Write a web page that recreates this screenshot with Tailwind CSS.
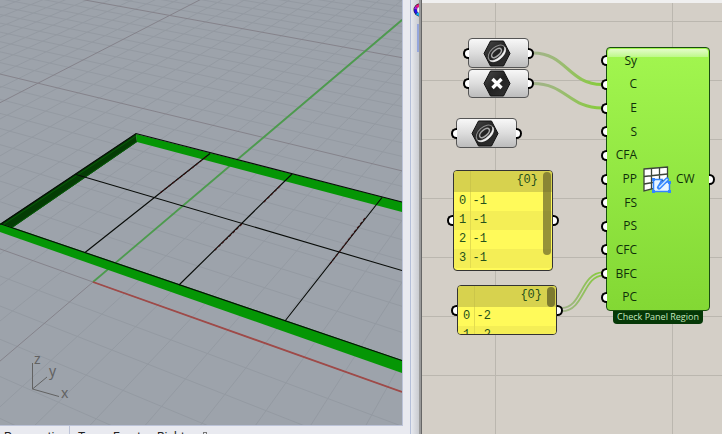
<!DOCTYPE html>
<html lang="en">
<head>
<meta charset="utf-8">
<title>Perspective view and component canvas</title>
<script src="https://cdn.jsdelivr.net/npm/@tailwindcss/browser@4"></script>
</head>
<body class="h-screen overflow-hidden">
<div class="flex h-full min-h-0 bg-[#e9eaf0]">

  <!-- 3D viewport with its tabs -->
  <section class="flex min-w-0 flex-1 flex-col">
    <div class="relative min-h-0 flex-1 overflow-hidden border-r border-b border-[#bcc3d8] bg-[#9da3ab]">
      <svg class="absolute inset-0 h-full w-full" viewBox="0 0 402 425" preserveAspectRatio="xMinYMin slice" role="img" aria-label="Perspective view">
        <g id="minor" stroke="#949aa2" stroke-width="1"></g>
        <g id="major" stroke="#85838b" stroke-width="1"></g>
        <path d="M93 282L402 20" stroke="#4d9b4e" stroke-width="1.8"/>
        <path d="M93 282L402 392" stroke="#9f4a48" stroke-width="1.8"/>
        <path d="M0 224L136 133.500L137 142L12 228Z" fill="#043c04"/>
        <path d="M12 227.500L137 141.500" stroke="#065c06" stroke-width="1"/>
        <path d="M2 225.500L136 136" stroke="#075b07" stroke-width="1"/>
        <path d="M136 134L402 202V212L137 142Z" fill="#059605"/>
        <path d="M0 223L402 360V373L0 232Z" fill="#059605"/>
        <g stroke="#080b08" stroke-width="1.1" fill="none">
          <path d="M0 224.500L136 133.500L402 202"/>
          <path d="M1 224L402 360.500"/>
          <path d="M76 174.500L402 270.500"/>
          <path d="M210 153.500L85 252.500M292 174L179 285M382 197.500L285 321"/>
          <path d="M206 157L160 193M280 186L264 202M242 224L214 251M365 218L330 264" stroke="#3a1010" stroke-dasharray="3 2"/>
        </g>
        <g stroke="#626262" stroke-width="1" fill="none">
          <path d="M32.500 363V389L47 377M32.500 389L59 396.500"/>
        </g>
        <g fill="#626262" font-family="'Noto Sans',sans-serif" font-size="14">
          <text x="34" y="364">z</text><text x="49" y="376">y</text><text x="61" y="398">x</text>
        </g>
      </svg>
    </div>
    <nav class="flex h-2 shrink-0 items-start overflow-hidden pl-1 font-[Roboto,sans-serif] text-[12px] leading-4 text-[#222]">
      <button class="w-[65px] pt-[3px] text-left">Perspective</button>
      <button class="w-[44px] border-l border-[#bcc3d8] pt-[3px] pl-2 text-left">Top</button>
      <button class="w-[44px] pt-[3px] text-left">Front</button>
      <button class="w-[46px] pt-[3px] text-left">Right</button>
      <button class="mt-[6px] h-2 w-1 border border-[#777]" aria-label="New viewport"></button>
    </nav>
  </section>

  <!-- Docking edge between the windows -->
  <div class="ml-[7px] w-[9px] shrink-0 overflow-hidden border-l border-[#b4bfd9] bg-gradient-to-r from-[#e7e9ef] to-[#c9cbd0]">
    <div class="relative h-full">
      <svg class="absolute top-[3px] left-[2px] h-[14px] w-[14px]" viewBox="0 0 14 14">
        <circle cx="7" cy="7" r="6.500" fill="#191919"/>
        <g fill="none" stroke-width="3">
          <path d="M7 2.500A4.500 4.500 0 0 0 3.500 4.200" stroke="#e81879"/>
          <path d="M3.500 4.200A4.500 4.500 0 0 0 2.500 6.500" stroke="#a51ce6"/>
          <path d="M2.500 6.500A4.500 4.500 0 0 0 3.900 10.200" stroke="#2412ed"/>
          <path d="M3.900 10.200A4.500 4.500 0 0 0 8 11.500" stroke="#12aaf0"/>
        </g>
        <circle cx="7" cy="7" r="3" fill="#eef0f4"/>
      </svg>
      <div class="absolute top-6 right-0 h-7 w-[2px] bg-[#95a6dc]"></div>
    </div>
  </div>
  <div class="w-[3px] shrink-0 border-r border-[#666] bg-[#999]"></div>

  <!-- Component canvas -->
  <main class="flex w-[300px] shrink-0 flex-col">
    <div class="h-[3px] bg-[#f0f0f0]"></div>
    <div class="relative min-h-0 flex-1 overflow-hidden bg-[#d4cfc7]">
      <svg class="absolute inset-0 h-full w-full" aria-hidden="true">
        <defs>
          <pattern id="sheet" x="73" y="18" width="177" height="59" patternUnits="userSpaceOnUse">
            <path d="M0 .500H177M.500 0V59" stroke="#bbb7af" stroke-width="1"/>
          </pattern>
          <linearGradient id="wire" gradientUnits="userSpaceOnUse" x1="110" x2="180" y1="0" y2="0">
            <stop offset="0" stop-color="#a2b28c"/><stop offset=".35" stop-color="#9dba78"/><stop offset="1" stop-color="#86cc3a"/>
          </linearGradient>
          <linearGradient id="wire2" gradientUnits="userSpaceOnUse" x1="140" x2="180" y1="0" y2="0">
            <stop offset="0" stop-color="#a2b28c"/><stop offset="1" stop-color="#86cc3a"/>
          </linearGradient>
          <linearGradient id="hex" x1="0" y1="0" x2="1" y2="1">
            <stop offset="0" stop-color="#4a4a4a"/><stop offset=".5" stop-color="#222"/><stop offset="1" stop-color="#333"/>
          </linearGradient>
        </defs>
        <rect width="100%" height="100%" fill="url(#sheet)"/>
        <g fill="none" stroke="url(#wire)" stroke-width="3">
          <path d="M111 50C144 50 147 81.500 180 81.500"/>
          <path d="M111 80.500C144 80.500 147 105 180 105"/>
        </g>
        <g fill="none" stroke="url(#wire2)">
          <path d="M140 306.500C161 306.500 160 271 181 271" stroke-width="5"/>
          <path d="M140 306.500C161 306.500 160 271 181 271" stroke="#d4cfc7" stroke-width="1.300"/>
        </g>
      </svg>

      <!-- Parameters -->
      <div class="absolute top-[35px] left-[46px] flex h-[30px] w-[61px] items-center justify-center rounded-[4px] border border-[#555] bg-gradient-to-b from-[#f8f8f8] via-[#dddddd] to-[#bcbcbc] pr-[3px]">
        <span class="absolute right-full h-[11px] w-[6px] rounded-l-full border-2 border-r-0 border-black bg-white"></span>
        <svg class="h-[27px] w-[28px]" viewBox="0 0 28 27" role="img" aria-label="Surface"><path id="hexagon" d="M7.500 1H20.500L27 13.500L20.500 26H7.500L1 13.500Z" fill="url(#hex)" stroke="#111"/>
          <g id="disc" fill="none" transform="rotate(-42 14 13.500)"><ellipse cx="14" cy="13" rx="10" ry="6" stroke="#8d8d8d" stroke-width="1"/><path d="M4 14C5 21.500 23 21.500 24 14C21 19 7 19 4 14Z" fill="#f4f4f4" stroke="#f4f4f4" stroke-width=".600"/><ellipse cx="14" cy="12.800" rx="6" ry="3" stroke="#a8a8a8" stroke-width="1.600"/></g></svg>
        <span class="absolute left-full h-[11px] w-[6px] rounded-r-full border-2 border-l-0 border-black bg-white"></span>
      </div>
      <div class="absolute top-[66px] left-[46px] flex h-[29px] w-[61px] items-center justify-center rounded-[4px] border border-[#555] bg-gradient-to-b from-[#f8f8f8] via-[#dddddd] to-[#bcbcbc] pr-[3px]">
        <span class="absolute right-full h-[11px] w-[6px] rounded-l-full border-2 border-r-0 border-black bg-white"></span>
        <svg class="h-[27px] w-[28px]" viewBox="0 0 28 27" role="img" aria-label="Point"><use href="#hexagon"/><path d="M9.500 9L18.500 18M18.500 9L9.500 18" stroke="#fff" stroke-width="3.400"/></svg>
        <span class="absolute left-full h-[11px] w-[6px] rounded-r-full border-2 border-l-0 border-black bg-white"></span>
      </div>
      <div class="absolute top-[115px] left-[34px] flex h-[30px] w-[61px] items-center justify-center rounded-[4px] border border-[#555] bg-gradient-to-b from-[#f8f8f8] via-[#dddddd] to-[#bcbcbc] pr-[3px]">
        <span class="absolute right-full h-[11px] w-[6px] rounded-l-full border-2 border-r-0 border-black bg-white"></span>
        <svg class="h-[27px] w-[28px]" viewBox="0 0 28 27" role="img" aria-label="Surface"><use href="#hexagon"/><use href="#disc"/></svg>
        <span class="absolute left-full h-[11px] w-[6px] rounded-r-full border-2 border-l-0 border-black bg-white"></span>
      </div>

      <!-- Panels -->
      <div class="absolute top-[167px] left-[31px] flex w-[100px] items-center font-['Liberation_Mono',monospace] text-[12px] leading-4 text-[#24501c]">
        <span class="absolute right-full h-[11px] w-[6px] rounded-l-full border-2 border-r-0 border-black bg-white"></span>
        <div class="relative h-[101px] w-full overflow-hidden rounded-[4px] border border-[#333] bg-[#fffa5a]">
          <table class="w-full border-collapse">
            <thead><tr class="h-[21px] bg-[#d7d24e]"><td class="w-4 border-r border-[#cbc64a]"></td><th class="pr-[14px] pb-1 text-right font-normal">{0}</th></tr></thead>
            <tbody>
              <tr class="h-[19px]"><td class="w-4 border-r border-[#e2dc50] pb-[2px] pl-[5px]">0</td><td class="pb-[2px] pl-[2px]">-1</td></tr>
              <tr class="h-[19px] bg-[#f4ee56]"><td class="border-r border-[#e2dc50] pb-[2px] pl-[5px]">1</td><td class="pb-[2px] pl-[2px]">-1</td></tr>
              <tr class="h-[19px]"><td class="border-r border-[#e2dc50] pb-[2px] pl-[5px]">2</td><td class="pb-[2px] pl-[2px]">-1</td></tr>
              <tr class="h-[19px] bg-[#f4ee56]"><td class="border-r border-[#e2dc50] pb-[2px] pl-[5px]">3</td><td class="pb-[2px] pl-[2px]">-1</td></tr>
            </tbody>
          </table>
          <div class="absolute top-px right-px h-[83px] w-2 rounded-full bg-[#5f5c26]/65"></div>
        </div>
        <span class="absolute left-full h-[11px] w-[6px] rounded-r-full border-2 border-l-0 border-black bg-white"></span>
      </div>
      <div class="absolute top-[282px] left-[35px] flex w-[100px] items-center font-['Liberation_Mono',monospace] text-[12px] leading-4 text-[#24501c]">
        <span class="absolute right-full h-[11px] w-[6px] rounded-l-full border-2 border-r-0 border-black bg-white"></span>
        <div class="relative h-[50px] w-full overflow-hidden rounded-[4px] border border-[#333] bg-[#fffa5a]">
          <table class="w-full border-collapse">
            <thead><tr class="h-[21px] bg-[#d7d24e]"><td class="w-4 border-r border-[#cbc64a]"></td><th class="pr-[14px] pb-1 text-right font-normal">{0}</th></tr></thead>
            <tbody>
              <tr class="h-[19px]"><td class="w-4 border-r border-[#e2dc50] pb-[2px] pl-[5px]">0</td><td class="pb-[2px] pl-[2px]">-2</td></tr>
              <tr class="h-[19px] bg-[#f4ee56]"><td class="border-r border-[#e2dc50] pb-[2px] pl-[5px]">1</td><td class="pb-[2px] pl-[2px]">-2</td></tr>
            </tbody>
          </table>
          <div class="absolute top-px right-px h-5 w-2 rounded-full bg-[#5f5c26]/75"></div>
        </div>
        <span class="absolute left-full h-[11px] w-[6px] rounded-r-full border-2 border-l-0 border-black bg-white"></span>
      </div>

      <!-- Check Panel Region component -->
      <div class="absolute top-[44px] left-[184px] w-[104px] font-['Open_Sans',sans-serif]">
        <div class="relative z-10 flex h-[264px] items-center rounded-[4px] border border-[#194d10] bg-gradient-to-b from-[#a2f64f] to-[#83d834] text-[12px] text-[#10300a]">
          <div class="absolute inset-x-px top-px h-2 rounded-t-[3px] bg-gradient-to-b from-[#e4fcc9] to-[#bdf889]"></div>
          <ul id="inputs" class="relative flex h-full w-[30px] flex-col py-px text-right"></ul>
          <svg class="ml-[6px] h-[28px] w-[28px]" viewBox="0 0 28 28" role="img" aria-label="Panel region">
            <path d="M1 4L24.500 2V20L1 26Z" fill="#fff" stroke="#3c463a" stroke-width="1.300"/>
            <path d="M1 11.500L24.500 9M1 19L24.500 15M8.500 3.500V24M16.500 3V22" stroke="#3c463a" stroke-width="1.300"/>
            <path d="M10.500 14.500H19L16 20L24 17H26.500V26.500H10.500Z" fill="#e9f6ff" stroke="#3385ff" stroke-width="1.500"/>
            <path d="M16 22.500L24 14.500" stroke="#3385ff" stroke-width="4.200" stroke-linecap="round"/><path d="M16.500 22L24 14.500" stroke="#c7e6ff" stroke-width="1.600" stroke-linecap="round"/>
            <path d="M9 13h3v3H9zM9 25h3v3H9zM25 25h3v3h-3zM25 16h3v3h-3z" fill="#3385ff"/>
          </svg>
          <span class="ml-[5px]">CW</span>
          <span class="absolute left-full h-[11px] w-[6px] rounded-r-full border-2 border-l-0 border-black bg-white"></span>
        </div>
        <div class="mx-[7px] -mt-px h-[14px] rounded-b-[4px] bg-[#053807] text-center text-[9px] leading-[14px] whitespace-nowrap text-[#c4e6bd]">Check Panel Region</div>
      </div>
    </div>
  </main>
</div>

<script>
  // Projects a ground-plane coordinate to the viewport.
  const project = (x, y) => {
    const a = -0.0386 * x, b = 0.0672 * y, w = 1 + a + b;
    return [(93 - 1520 * a + 769 * b) / w, (282 - 292 * a - 293 * b) / w];
  };
  const line = (group, p, q) => {
    const el = document.createElementNS('http://www.w3.org/2000/svg', 'line');
    el.setAttribute('x1', p[0]); el.setAttribute('y1', p[1]);
    el.setAttribute('x2', q[0]); el.setAttribute('y2', q[1]);
    document.getElementById(group).append(el);
  };
  for (let i = -60; i <= 40; i++) {
    const v = i / 2, group = i % 10 ? 'minor' : 'major';
    if (v <= 14) line(group, project(v, v > 5 ? 0 : -5), project(v, 30));
    if (v >= -5) line(group, project(-40, v), project(v > 5 ? 12 : 6, v));
  }
  // Input names, each with its grip.
  for (const name of ['Sy', 'C', 'E', 'S', 'CFA', 'PP', 'FS', 'PS', 'CFC', 'BFC', 'PC']) {
    const li = document.createElement('li');
    li.className = 'relative flex flex-1 items-center justify-end';
    const grip = document.createElement('span');
    grip.className = 'absolute right-full h-[11px] w-[6px] rounded-l-full border-2 border-r-0 border-black bg-white';
    li.append(grip, name);
    document.getElementById('inputs').append(li);
  }
</script>
</body>
</html>
